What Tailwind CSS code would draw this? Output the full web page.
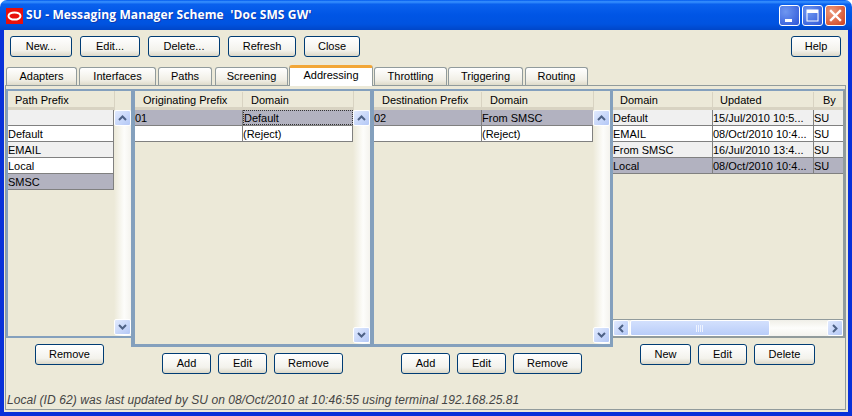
<!DOCTYPE html>
<html lang="en">
<head>
    <meta charset="UTF-8">
    <title>SU - Messaging Manager Scheme 'Doc SMS GW'</title>
    <script src="https://cdn.jsdelivr.net/npm/@tailwindcss/browser@4"></script>
</head>
<body class="bg-white">
<div class="w-[852px] h-[416px] flex flex-col overflow-hidden rounded-t-[7px] font-['Liberation_Sans',sans-serif] text-[11px] text-black">

    <!-- title bar -->
    <div class="h-[30px] flex items-center pl-[6px] pr-[6px] bg-[linear-gradient(to_bottom,#0058ee_0%,#3a93ff_6%,#0a61ee_14%,#0055e5_50%,#0053e0_80%,#0046c8_100%)]">
        <svg width="17" height="16" viewBox="0 0 17 16" class="mt-[1px]">
            <rect width="17" height="16" fill="#e8100c"/>
            <ellipse cx="8.5" cy="8" rx="6" ry="3.6" fill="none" stroke="#fff" stroke-width="2"/>
        </svg>
        <span class="ml-[3px] text-white font-bold text-[12px] tracking-[0.12px] font-['Open_Sans',sans-serif] [text-shadow:1px_1px_0_#0f3bb0]">SU - Messaging Manager Scheme &nbsp;'Doc SMS GW'</span>
        <div class="ml-auto flex gap-[2px]">
            <div class="w-[21px] h-[21px] rounded-[3px] border border-white bg-[radial-gradient(circle_at_30%_30%,#6f97f0,#2c55d8)] flex items-center justify-center">
                <svg width="19" height="19" viewBox="0 0 19 19"><rect x="5" y="13" width="7" height="3" fill="#fff"/></svg>
            </div>
            <div class="w-[21px] h-[21px] rounded-[3px] border border-white bg-[radial-gradient(circle_at_30%_30%,#6f97f0,#2c55d8)] flex items-center justify-center">
                <svg width="19" height="19" viewBox="0 0 19 19"><rect x="4" y="4" width="11" height="11" fill="none" stroke="#fff" stroke-width="1"/><rect x="4" y="4" width="11" height="3" fill="#fff"/></svg>
            </div>
            <div class="w-[21px] h-[21px] rounded-[3px] border border-white bg-[radial-gradient(circle_at_30%_30%,#ec9a7c,#cf3f1c)] flex items-center justify-center">
                <svg width="19" height="19" viewBox="0 0 19 19"><path d="M5 5 L14 14 M14 5 L5 14" stroke="#fff" stroke-width="2.4" stroke-linecap="square"/></svg>
            </div>
        </div>
    </div>

    <!-- window body -->
    <div class="flex-1 flex flex-col bg-[#ece9d8] border-l-[4px] border-r-[4px] border-b-[4px] border-[#0831d9] min-h-0">

        <!-- toolbar -->
        <div class="h-[32px] shrink-0 flex items-start pt-[6px] pl-[6px] pr-[7px] gap-[8px]">
            <button class="w-[62px] h-[21px] rounded-[3px] border border-[#003c74] bg-[linear-gradient(to_bottom,#fff,#f3f2ec_70%,#dcd8c8)]">New...</button>
            <button class="w-[60px] h-[21px] rounded-[3px] border border-[#003c74] bg-[linear-gradient(to_bottom,#fff,#f3f2ec_70%,#dcd8c8)]">Edit...</button>
            <button class="w-[72px] h-[21px] rounded-[3px] border border-[#003c74] bg-[linear-gradient(to_bottom,#fff,#f3f2ec_70%,#dcd8c8)]">Delete...</button>
            <button class="w-[68px] h-[21px] rounded-[3px] border border-[#003c74] bg-[linear-gradient(to_bottom,#fff,#f3f2ec_70%,#dcd8c8)]">Refresh</button>
            <button class="w-[56px] h-[21px] rounded-[3px] border border-[#003c74] bg-[linear-gradient(to_bottom,#fff,#f3f2ec_70%,#dcd8c8)]">Close</button>
            <button class="ml-auto w-[50px] h-[21px] rounded-[3px] border border-[#003c74] bg-[linear-gradient(to_bottom,#fff,#f3f2ec_70%,#dcd8c8)]">Help</button>
        </div>

        <!-- tabs -->
        <div class="h-[23px] shrink-0 flex items-end pl-[2px] relative z-10">
            <div class="w-[71px] h-[18px] mr-[2px] flex items-center justify-center rounded-t-[3px] border border-b-0 border-[#919b9c] bg-[linear-gradient(to_bottom,#fff,#f1efe6_70%,#dedbca)]">Adapters</div>
            <div class="w-[77px] h-[18px] mr-[2px] flex items-center justify-center rounded-t-[3px] border border-b-0 border-[#919b9c] bg-[linear-gradient(to_bottom,#fff,#f1efe6_70%,#dedbca)]">Interfaces</div>
            <div class="w-[54px] h-[18px] mr-[3px] flex items-center justify-center rounded-t-[3px] border border-b-0 border-[#919b9c] bg-[linear-gradient(to_bottom,#fff,#f1efe6_70%,#dedbca)]">Paths</div>
            <div class="w-[73px] h-[18px] mr-[1px] flex items-center justify-center rounded-t-[3px] border border-b-0 border-[#919b9c] bg-[linear-gradient(to_bottom,#fff,#f1efe6_70%,#dedbca)]">Screening</div>
            <div class="w-[84px] h-[21px] mb-[-1px] flex items-center justify-center rounded-t-[3px] border-x border-[#919b9c] border-t-[3px] border-t-[#f2a637] bg-white pb-[3px]">Addressing</div>
            <div class="w-[73px] h-[18px] ml-[1px] mr-[1px] flex items-center justify-center rounded-t-[3px] border border-b-0 border-[#919b9c] bg-[linear-gradient(to_bottom,#fff,#f1efe6_70%,#dedbca)]">Throttling</div>
            <div class="w-[75px] h-[18px] mr-[2px] flex items-center justify-center rounded-t-[3px] border border-b-0 border-[#919b9c] bg-[linear-gradient(to_bottom,#fff,#f1efe6_70%,#dedbca)]">Triggering</div>
            <div class="w-[63px] h-[18px] flex items-center justify-center rounded-t-[3px] border border-b-0 border-[#919b9c] bg-[linear-gradient(to_bottom,#fff,#f1efe6_70%,#dedbca)]">Routing</div>
        </div>

        <!-- tab panel -->
        <div class="flex-1 min-h-0 ml-[1px] mr-[2px] mb-[2px] border border-[#919b9c] flex flex-col pt-[3px]">
            <div class="flex items-start">

                <!-- path prefix pane -->
                <div class="w-[125px] shrink-0 flex flex-col items-center">
                    <div class="w-full h-[249px] flex border-2 border-r-0 border-[#84a0bd]">
                        <div class="flex-1 min-w-0">
                            <div class="h-[19px] flex items-center pl-[7px] pt-[2px] pr-[1px] border-b-[3px] border-[#d8d3c2] bg-[#ece9d8]">Path Prefix</div>
                            <div class="h-[16px] border-b border-r border-[#808080] bg-[#f0f0f0]"></div>
                            <div class="h-[16px] leading-[17px] border-b border-r border-[#808080] bg-white">Default</div>
                            <div class="h-[16px] leading-[17px] border-b border-r border-[#808080] bg-[#f0f0f0]">EMAIL</div>
                            <div class="h-[16px] leading-[17px] border-b border-r border-[#808080] bg-white">Local</div>
                            <div class="h-[16px] leading-[17px] border-b border-r border-[#808080] bg-[#b2b2c0]">SMSC</div>
                        </div>
                        <div class="w-[17px] flex flex-col">
                            <div class="h-[19px] border-l border-[#d8d3c2] bg-[#ece9d8]"></div>
                            <div class="flex-1 flex flex-col justify-between pb-[1px] bg-[linear-gradient(to_right,#ece9d8,#fdfdfb_60%,#f4f3ee)]">
                                <div class="h-[16px] rounded-[2px] border border-white bg-[linear-gradient(to_bottom_right,#e1eafe,#b4c8f6)] flex items-center justify-center">
                                    <svg width="9" height="6" viewBox="0 0 9 6"><path d="M1 5 L4.5 1.5 L8 5" fill="none" stroke="#4d6185" stroke-width="2"/></svg>
                                </div>
                                <div class="h-[16px] rounded-[2px] border border-white bg-[linear-gradient(to_bottom_right,#e1eafe,#b4c8f6)] flex items-center justify-center">
                                    <svg width="9" height="6" viewBox="0 0 9 6"><path d="M1 1 L4.5 4.5 L8 1" fill="none" stroke="#4d6185" stroke-width="2"/></svg>
                                </div>
                            </div>
                        </div>
                    </div>
                    <div class="flex justify-center gap-[7px] mt-[6px] ml-[2px]">
                        <button class="w-[69px] h-[21px] rounded-[3px] border border-[#003c74] bg-[linear-gradient(to_bottom,#fff,#f3f2ec_70%,#dcd8c8)]">Remove</button>
                    </div>
                </div>

                <!-- originating prefix pane -->
                <div class="w-[243px] shrink-0 flex flex-col items-center">
                    <div class="w-full h-[258px] flex border-x-[4px] border-b-[3px] border-t-2 border-[#84a0bd]">
                        <div class="flex-1 min-w-0">
                            <div class="h-[19px] flex items-center pt-[2px] border-b-[3px] border-[#d8d3c2] bg-[#ece9d8]">
                                <div class="w-[108px] pl-[8px] border-r border-[#d8d3c2]">Originating Prefix</div>
                                <div class="pl-[8px]">Domain</div>
                            </div>
                            <div class="h-[16px] leading-[17px] flex border-b border-[#808080] bg-[#b2b2c0]">
                                <div class="w-[108px] border-r border-[#808080]">01</div>
                                <div class="flex-1 border border-dotted border-[#333] leading-[15px]">Default</div>
                            </div>
                            <div class="h-[16px] leading-[17px] flex border-b border-r border-[#808080] bg-white">
                                <div class="w-[108px] border-r border-[#808080]"></div>
                                <div>(Reject)</div>
                            </div>
                        </div>
                        <div class="w-[17px] flex flex-col">
                            <div class="h-[19px] border-l border-[#d8d3c2] bg-[#ece9d8]"></div>
                            <div class="flex-1 flex flex-col justify-between pb-[1px] bg-[linear-gradient(to_right,#ece9d8,#fdfdfb_60%,#f4f3ee)]">
                                <div class="h-[16px] rounded-[2px] border border-white bg-[linear-gradient(to_bottom_right,#e1eafe,#b4c8f6)] flex items-center justify-center">
                                    <svg width="9" height="6" viewBox="0 0 9 6"><path d="M1 5 L4.5 1.5 L8 5" fill="none" stroke="#4d6185" stroke-width="2"/></svg>
                                </div>
                                <div class="h-[16px] rounded-[2px] border border-white bg-[linear-gradient(to_bottom_right,#e1eafe,#b4c8f6)] flex items-center justify-center">
                                    <svg width="9" height="6" viewBox="0 0 9 6"><path d="M1 1 L4.5 4.5 L8 1" fill="none" stroke="#4d6185" stroke-width="2"/></svg>
                                </div>
                            </div>
                        </div>
                    </div>
                    <div class="flex justify-center gap-[7px] mt-[6px]">
                        <button class="w-[49px] h-[21px] rounded-[3px] border border-[#003c74] bg-[linear-gradient(to_bottom,#fff,#f3f2ec_70%,#dcd8c8)]">Add</button>
                        <button class="w-[49px] h-[21px] rounded-[3px] border border-[#003c74] bg-[linear-gradient(to_bottom,#fff,#f3f2ec_70%,#dcd8c8)]">Edit</button>
                        <button class="w-[69px] h-[21px] rounded-[3px] border border-[#003c74] bg-[linear-gradient(to_bottom,#fff,#f3f2ec_70%,#dcd8c8)]">Remove</button>
                    </div>
                </div>

                <!-- destination prefix pane -->
                <div class="w-[239px] shrink-0 flex flex-col items-center">
                    <div class="w-full h-[258px] flex border-r-[3px] border-b-[3px] border-t-2 border-[#84a0bd]">
                        <div class="flex-1 min-w-0">
                            <div class="h-[19px] flex items-center pt-[2px] border-b-[3px] border-[#d8d3c2] bg-[#ece9d8]">
                                <div class="w-[108px] pl-[8px] border-r border-[#d8d3c2]">Destination Prefix</div>
                                <div class="pl-[8px]">Domain</div>
                            </div>
                            <div class="h-[16px] leading-[17px] flex border-b border-[#808080] bg-[#b2b2c0]">
                                <div class="w-[108px] border-r border-[#808080]">02</div>
                                <div>From SMSC</div>
                            </div>
                            <div class="h-[16px] leading-[17px] flex border-b border-r border-[#808080] bg-white">
                                <div class="w-[108px] border-r border-[#808080]"></div>
                                <div>(Reject)</div>
                            </div>
                        </div>
                        <div class="w-[17px] flex flex-col">
                            <div class="h-[19px] border-l border-[#d8d3c2] bg-[#ece9d8]"></div>
                            <div class="flex-1 flex flex-col justify-between pb-[1px] bg-[linear-gradient(to_right,#ece9d8,#fdfdfb_60%,#f4f3ee)]">
                                <div class="h-[16px] rounded-[2px] border border-white bg-[linear-gradient(to_bottom_right,#e1eafe,#b4c8f6)] flex items-center justify-center">
                                    <svg width="9" height="6" viewBox="0 0 9 6"><path d="M1 5 L4.5 1.5 L8 5" fill="none" stroke="#4d6185" stroke-width="2"/></svg>
                                </div>
                                <div class="h-[16px] rounded-[2px] border border-white bg-[linear-gradient(to_bottom_right,#e1eafe,#b4c8f6)] flex items-center justify-center">
                                    <svg width="9" height="6" viewBox="0 0 9 6"><path d="M1 1 L4.5 4.5 L8 1" fill="none" stroke="#4d6185" stroke-width="2"/></svg>
                                </div>
                            </div>
                        </div>
                    </div>
                    <div class="flex justify-center gap-[7px] mt-[6px] mr-[4px]">
                        <button class="w-[49px] h-[21px] rounded-[3px] border border-[#003c74] bg-[linear-gradient(to_bottom,#fff,#f3f2ec_70%,#dcd8c8)]">Add</button>
                        <button class="w-[49px] h-[21px] rounded-[3px] border border-[#003c74] bg-[linear-gradient(to_bottom,#fff,#f3f2ec_70%,#dcd8c8)]">Edit</button>
                        <button class="w-[69px] h-[21px] rounded-[3px] border border-[#003c74] bg-[linear-gradient(to_bottom,#fff,#f3f2ec_70%,#dcd8c8)]">Remove</button>
                    </div>
                </div>

                <!-- domain pane -->
                <div class="w-[232px] shrink-0 flex flex-col items-center">
                    <div class="w-full h-[249px] flex flex-col border-t-2 border-r-2 border-b-2 border-t-[#84a0bd] border-r-[#919b9c] border-b-[#919b9c]">
                        <div class="flex-1 min-h-0">
                            <div class="h-[19px] flex items-center pt-[2px] border-b-[3px] border-[#d8d3c2] bg-[#ece9d8]">
                                <div class="w-[100px] pl-[7px] border-r border-[#d8d3c2]">Domain</div>
                                <div class="w-[101px] pl-[7px] border-r border-[#d8d3c2]">Updated</div>
                                <div class="pl-[9px]">By</div>
                            </div>
                            <div class="h-[16px] leading-[17px] flex border-b border-[#808080] bg-[#f0f0f0]">
                                <div class="w-[100px] border-r border-[#808080]">Default</div>
                                <div class="w-[101px] border-r border-[#808080]">15/Jul/2010 10:5...</div>
                                <div>SU</div>
                            </div>
                            <div class="h-[16px] leading-[17px] flex border-b border-[#808080] bg-white">
                                <div class="w-[100px] border-r border-[#808080]">EMAIL</div>
                                <div class="w-[101px] border-r border-[#808080]">08/Oct/2010 10:4...</div>
                                <div>SU</div>
                            </div>
                            <div class="h-[16px] leading-[17px] flex border-b border-[#808080] bg-[#f0f0f0]">
                                <div class="w-[100px] border-r border-[#808080]">From SMSC</div>
                                <div class="w-[101px] border-r border-[#808080]">16/Jul/2010 13:4...</div>
                                <div>SU</div>
                            </div>
                            <div class="h-[16px] leading-[17px] flex border-b border-[#808080] bg-[#b2b2c0]">
                                <div class="w-[100px] border-r border-[#808080]">Local</div>
                                <div class="w-[101px] border-r border-[#808080]">08/Oct/2010 10:4...</div>
                                <div>SU</div>
                            </div>
                        </div>
                        <!-- horizontal scrollbar -->
                        <div class="h-[17px] flex border-t border-[#919b9c] bg-[linear-gradient(to_bottom,#f0efe8,#fdfdfb_50%,#f4f3ee)]">
                            <div class="w-[16px] rounded-[2px] border border-white bg-[linear-gradient(to_bottom_right,#e1eafe,#b4c8f6)] flex items-center justify-center">
                                <svg width="6" height="9" viewBox="0 0 6 9"><path d="M5 1 L1.5 4.5 L5 8" fill="none" stroke="#4d6185" stroke-width="2"/></svg>
                            </div>
                            <div class="ml-[1px] w-[140px] rounded-[2px] border border-white bg-[linear-gradient(to_bottom,#d3e0fd,#b9cdf9)] flex items-center justify-center">
                                <svg width="8" height="7" viewBox="0 0 8 7"><path d="M0.5 0V7M2.5 0V7M4.5 0V7M6.5 0V7" stroke="#eef3ff" stroke-width="1"/></svg>
                            </div>
                            <div class="ml-auto w-[16px] rounded-[2px] border border-white bg-[linear-gradient(to_bottom_right,#e1eafe,#b4c8f6)] flex items-center justify-center">
                                <svg width="6" height="9" viewBox="0 0 6 9"><path d="M1 1 L4.5 4.5 L1 8" fill="none" stroke="#4d6185" stroke-width="2"/></svg>
                            </div>
                        </div>
                    </div>
                    <div class="flex justify-center gap-[7px] mt-[6px] mr-[3px]">
                        <button class="w-[51px] h-[21px] rounded-[3px] border border-[#003c74] bg-[linear-gradient(to_bottom,#fff,#f3f2ec_70%,#dcd8c8)]">New</button>
                        <button class="w-[49px] h-[21px] rounded-[3px] border border-[#003c74] bg-[linear-gradient(to_bottom,#fff,#f3f2ec_70%,#dcd8c8)]">Edit</button>
                        <button class="w-[61px] h-[21px] rounded-[3px] border border-[#003c74] bg-[linear-gradient(to_bottom,#fff,#f3f2ec_70%,#dcd8c8)]">Delete</button>
                    </div>
                </div>
            </div>

            <!-- status line -->
            <div class="mt-auto pb-[2px] pl-[1px] text-[12px] italic tracking-[0.08px] text-[#444] leading-[14px]">Local (ID 62) was last updated by SU on 08/Oct/2010 at 10:46:55 using terminal 192.168.25.81</div>
        </div>
    </div>
</div>
</body>
</html>
